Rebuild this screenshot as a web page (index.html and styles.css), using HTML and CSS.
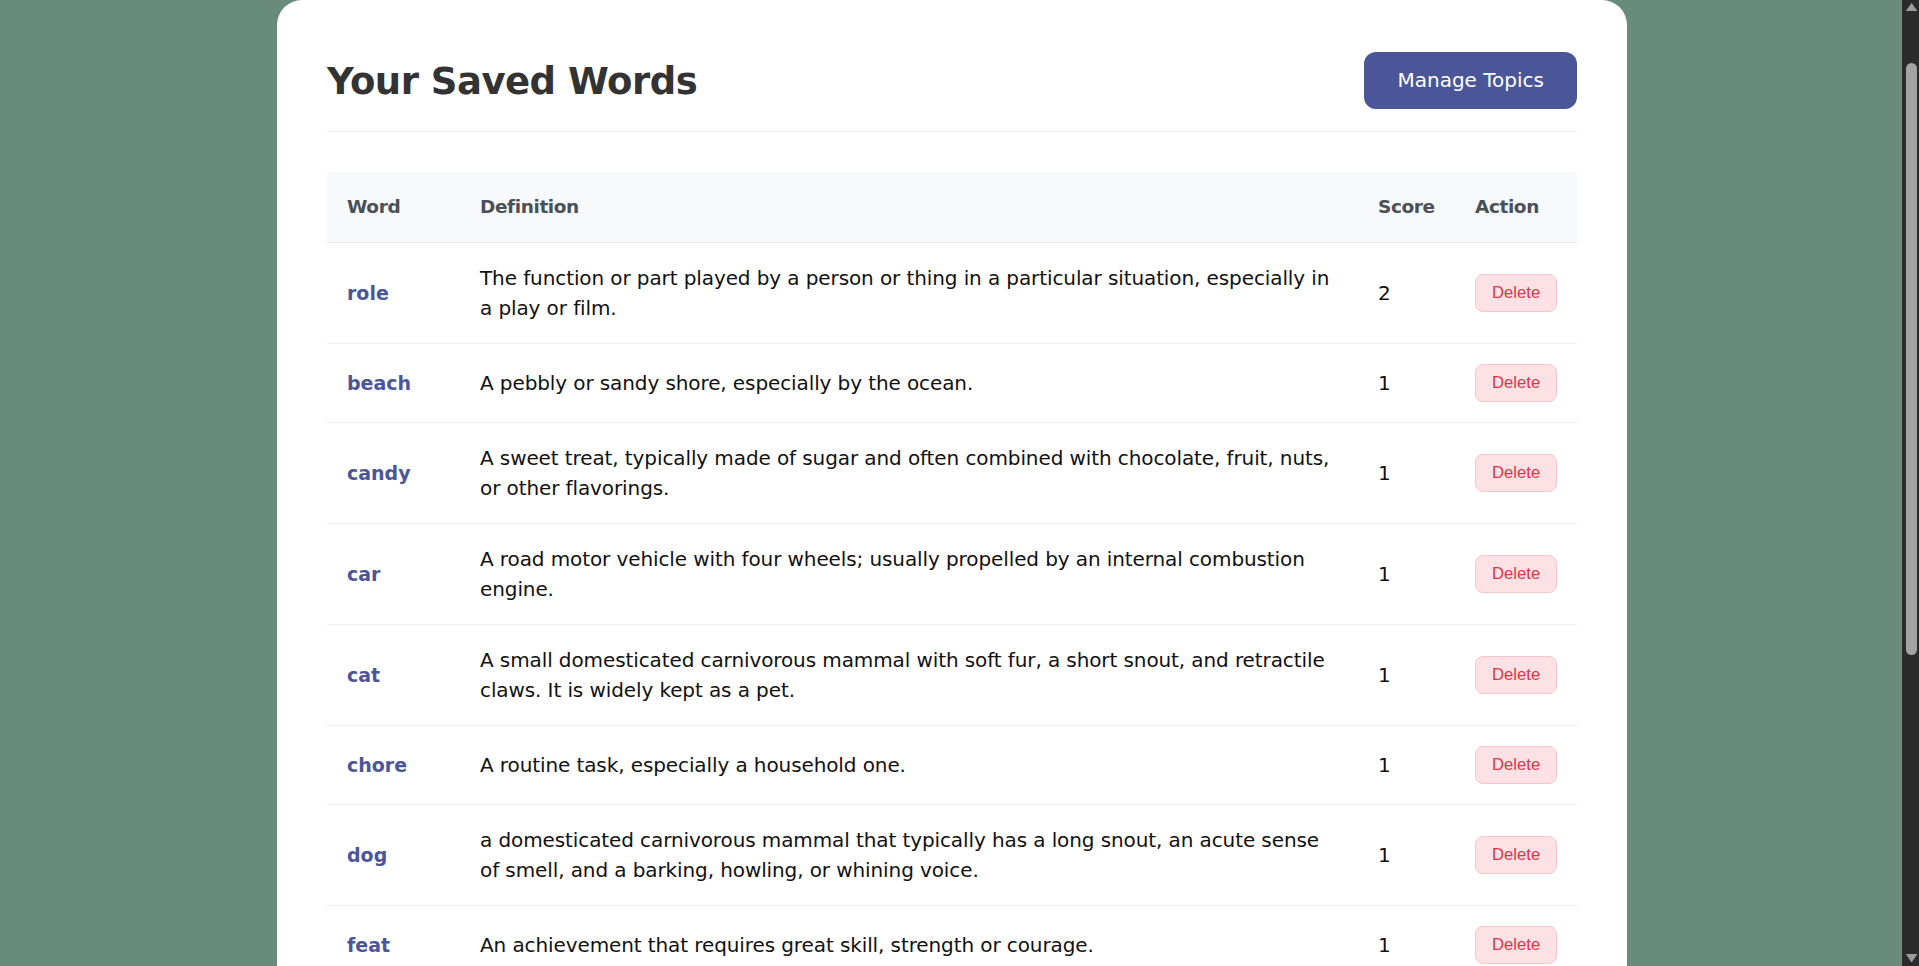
FILE: index.html
```html
<!DOCTYPE html>
<html lang="en">
<head>
<meta charset="utf-8">
<title>Your Saved Words</title>
<link rel="stylesheet" href="styles.css">
</head>
<body>
<main class="card">
  <header class="card-header">
    <h1 class="title">Your Saved Words</h1>
    <button class="btn-primary" type="button">Manage Topics</button>
  </header>
  <table class="words">
    <colgroup>
      <col class="c-word">
      <col class="c-def">
      <col class="c-score">
      <col class="c-action">
    </colgroup>
    <thead>
      <tr><th>Word</th><th>Definition</th><th>Score</th><th>Action</th></tr>
    </thead>
    <tbody>
      <tr><td class="word">role</td><td class="def">The function or part played by a person or thing in a particular situation, especially in a play or film.</td><td class="score">2</td><td><button class="btn-delete" type="button">Delete</button></td></tr>
      <tr><td class="word">beach</td><td class="def">A pebbly or sandy shore, especially by the ocean.</td><td class="score">1</td><td><button class="btn-delete" type="button">Delete</button></td></tr>
      <tr><td class="word">candy</td><td class="def">A sweet treat, typically made of sugar and often combined with chocolate, fruit, nuts, or other flavorings.</td><td class="score">1</td><td><button class="btn-delete" type="button">Delete</button></td></tr>
      <tr><td class="word">car</td><td class="def">A road motor vehicle with four wheels; usually propelled by an internal combustion engine.</td><td class="score">1</td><td><button class="btn-delete" type="button">Delete</button></td></tr>
      <tr><td class="word">cat</td><td class="def">A small domesticated carnivorous mammal with soft fur, a short snout, and retractile claws. It is widely kept as a pet.</td><td class="score">1</td><td><button class="btn-delete" type="button">Delete</button></td></tr>
      <tr><td class="word">chore</td><td class="def">A routine task, especially a household one.</td><td class="score">1</td><td><button class="btn-delete" type="button">Delete</button></td></tr>
      <tr><td class="word">dog</td><td class="def">a domesticated carnivorous mammal that typically has a long snout, an acute sense of smell, and a barking, howling, or whining voice.</td><td class="score">1</td><td><button class="btn-delete" type="button">Delete</button></td></tr>
      <tr><td class="word">feat</td><td class="def">An achievement that requires great skill, strength or courage.</td><td class="score">1</td><td><button class="btn-delete" type="button">Delete</button></td></tr>
    </tbody>
  </table>
</main>
<aside class="scrollbar" aria-hidden="true">
  <svg class="sb-arrow" viewBox="0 0 17 17" width="17" height="17"><path d="M3.8 11 L9.6 3 L15.4 11 Z"/></svg>
  <div class="sb-track"><div class="sb-thumb"></div></div>
  <svg class="sb-arrow" viewBox="0 0 17 17" width="17" height="17"><path d="M3.8 5 L15.4 5 L9.6 13.5 Z"/></svg>
</aside>
</body>
</html>
```

FILE: styles.css
```css
html {
  background: #688b7c;
}

body {
  margin: 0;
  padding: 0 17px 0 2px;
  font-family: "DejaVu Sans", sans-serif;
}

.scrollbar {
  position: fixed;
  top: 0;
  right: 0;
  bottom: 0;
  width: 17px;
  background: #2b2b2b;
  display: flex;
  flex-direction: column;
}

.sb-arrow {
  display: block;
  flex: 0 0 17px;
  fill: #9c9c9c;
}

.sb-track {
  flex: 1 1 auto;
  padding-top: 46px;
}

.sb-thumb {
  width: 11px;
  height: 592px;
  margin-left: 4px;
  background: #a3a3a3;
  border-radius: 6px;
}

.card {
  width: 1350px;
  box-sizing: border-box;
  margin: 0 auto;
  background: #ffffff;
  border-radius: 25px;
  padding: 52px 50px 50px;
}

.card-header {
  display: flex;
  justify-content: space-between;
  align-items: center;
  padding-bottom: 22px;
  border-bottom: 1px solid #ebebeb;
  margin-bottom: 40px;
}

.title {
  margin: 0;
  font-size: 37px;
  line-height: 48px;
  font-weight: 700;
  color: #333333;
  letter-spacing: -0.5px;
  padding-top: 3px;
}

.btn-primary {
  font-family: "DejaVu Sans", sans-serif;
  font-size: 20px;
  line-height: 31px;
  padding: 13px 33px;
  color: #ffffff;
  background: #4b5699;
  border: 0;
  border-radius: 12px;
}

.words {
  width: 100%;
  border-collapse: collapse;
  table-layout: fixed;
}

.c-word { width: 133px; }
.c-def { width: 898px; }
.c-score { width: 97px; }
.c-action { width: 122px; }

.words th,
.words td {
  padding: 20px;
  text-align: left;
  vertical-align: middle;
  line-height: 30px;
  border-bottom: 1px solid #eceeef;
}

.words th {
  background: #f8f9fa;
  font-size: 18.5px;
  font-weight: 700;
  color: #495057;
  letter-spacing: -0.4px;
}

.words td {
  font-size: 20px;
  color: #111111;
}

.words td.word {
  font-size: 19px;
  font-weight: 700;
  color: #4b5699;
}

.words td.def {
  letter-spacing: -0.1px;
}

.btn-delete {
  display: block;
  font-family: "Liberation Sans", Arial, sans-serif;
  font-size: 16.67px;
  line-height: 20px;
  padding: 8px 16px;
  border: 1px solid #f6c5cb;
  background: #fee1e4;
  color: #dc3545;
  border-radius: 8px;
}
```
